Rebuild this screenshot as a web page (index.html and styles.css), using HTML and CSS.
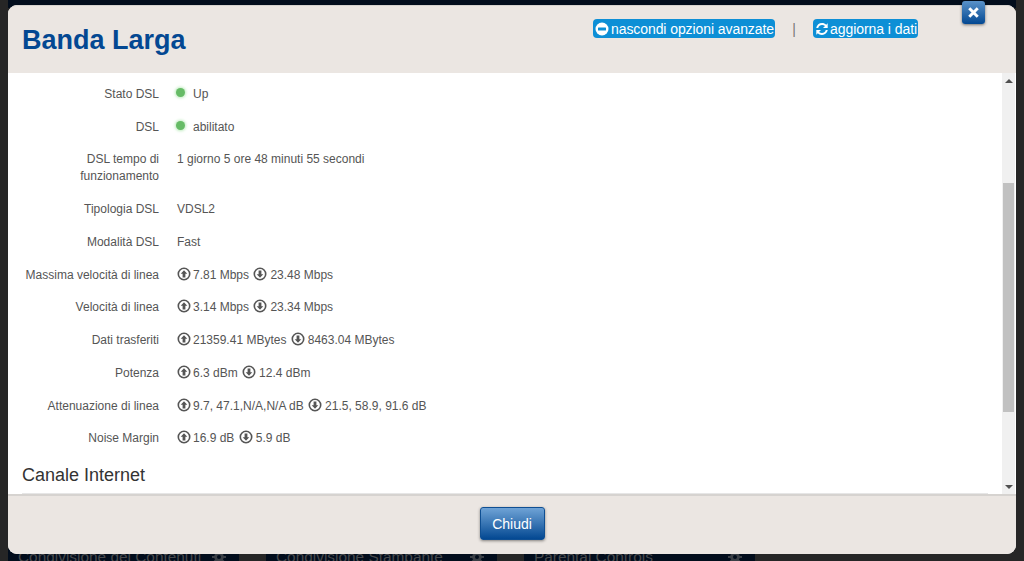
FILE: index.html
```html
<!DOCTYPE html>
<html lang="it">
<head>
<meta charset="utf-8">
<title>Banda Larga</title>
<link rel="stylesheet" href="styles.css">
</head>
<body>
<svg class="defs" width="0" height="0" aria-hidden="true">
  <symbol id="up" viewBox="0 0 14 14"><circle cx="7" cy="7" r="5.7" fill="none" stroke="currentColor" stroke-width="1.6"/><path d="M7 3.200 10.300 6.800H8.400V10.400H5.600V6.800H3.700Z" fill="currentColor"/></symbol>
  <symbol id="down" viewBox="0 0 14 14"><circle cx="7" cy="7" r="5.7" fill="none" stroke="currentColor" stroke-width="1.6"/><path d="M7 10.800 3.700 7.200H5.600V3.600H8.400V7.200H10.300Z" fill="currentColor"/></symbol>
  <symbol id="gear" viewBox="0 0 16 16"><circle cx="8" cy="8" r="3.600" fill="none" stroke="currentColor" stroke-width="2.400"/><path d="M8 1V15M1 8H15M3 3 13 13M13 3 3 13" stroke="currentColor" stroke-width="2"/><circle cx="8" cy="8" r="2" fill="#020d1c"/></symbol>
</svg>
<div class="backdrop-top"></div>
<div class="backdrop">
  <div class="tile"><span class="peek">Condivisione dei Contenuti</span><svg class="gear"><use href="#gear"/></svg></div>
  <div class="tile"><span class="peek">Condivisione Stampante</span><svg class="gear"><use href="#gear"/></svg></div>
  <div class="tile"><span class="peek">Parental Controls</span><svg class="gear"><use href="#gear"/></svg></div>
</div>
<div class="modal">
  <header class="modal-head">
    <h1 class="title">Banda Larga</h1>
    <div class="actions">
      <a class="pill pill-hide"><svg class="pill-ico" viewBox="0 0 14 14"><circle cx="7" cy="7" r="6.500" fill="#fff"/><rect x="3" y="5.600" width="8" height="2.800" rx=".5" fill="#0d8fd6"/></svg>nascondi opzioni avanzate</a>
      <span class="sep">|</span>
      <a class="pill pill-refresh"><svg class="pill-ico" viewBox="0 0 14 14"><path d="M1.200 5.900C1.800 3 4.100 1 7 1c1.700 0 3.100.7 4.200 1.700L12.700 1.300V6H8L10 4C9.200 3.300 8.200 2.900 7 2.900 5.200 2.900 3.700 4 3.200 5.900Z" fill="#fff"/><path d="M12.800 8.100C12.200 11 9.900 13 7 13c-1.700 0-3.100-.7-4.200-1.700L1.300 12.700V8H6L4 10C4.800 10.700 5.800 11.100 7 11.100 8.800 11.100 10.300 10 10.800 8.100Z" fill="#fff"/></svg>aggiorna i dati</a>
    </div>
  </header>
  <button class="close" aria-label="Chiudi"><svg viewBox="0 0 12 12" width="11" height="11"><path d="M2.500 2.500 9.500 9.500M9.500 2.500 2.500 9.500" stroke="#fff" stroke-width="3.200" stroke-linecap="square" fill="none"/></svg></button>
  <div class="modal-body">
    <div class="content">
      <div class="row led-row"><div class="lab">Stato DSL</div><div class="val"><i class="led"></i>Up</div></div>
      <div class="row led-row"><div class="lab">DSL</div><div class="val"><i class="led"></i>abilitato</div></div>
      <div class="row tall"><div class="lab">DSL tempo di funzionamento</div><div class="val">1 giorno 5 ore 48 minuti 55 secondi</div></div>
      <div class="row"><div class="lab">Tipologia DSL</div><div class="val">VDSL2</div></div>
      <div class="row"><div class="lab">Modalità DSL</div><div class="val">Fast</div></div>
      <div class="row"><div class="lab">Massima velocità di linea</div><div class="val"><svg class="arrow"><use href="#up"/></svg>7.81 Mbps <svg class="arrow arrow-down"><use href="#down"/></svg>23.48 Mbps</div></div>
      <div class="row"><div class="lab">Velocità di linea</div><div class="val"><svg class="arrow"><use href="#up"/></svg>3.14 Mbps <svg class="arrow arrow-down"><use href="#down"/></svg>23.34 Mbps</div></div>
      <div class="row"><div class="lab">Dati trasferiti</div><div class="val"><svg class="arrow"><use href="#up"/></svg>21359.41 MBytes <svg class="arrow arrow-down"><use href="#down"/></svg>8463.04 MBytes</div></div>
      <div class="row"><div class="lab">Potenza</div><div class="val"><svg class="arrow"><use href="#up"/></svg>6.3 dBm <svg class="arrow arrow-down"><use href="#down"/></svg>12.4 dBm</div></div>
      <div class="row"><div class="lab">Attenuazione di linea</div><div class="val"><svg class="arrow"><use href="#up"/></svg>9.7, 47.1,N/A,N/A dB <svg class="arrow arrow-down"><use href="#down"/></svg>21.5, 58.9, 91.6 dB</div></div>
      <div class="row"><div class="lab">Noise Margin</div><div class="val"><svg class="arrow"><use href="#up"/></svg>16.9 dB <svg class="arrow arrow-down"><use href="#down"/></svg>5.9 dB</div></div>
      <h2 class="section">Canale Internet</h2>
    </div>
    <div class="scrollbar">
      <span class="tri tri-up"></span>
      <div class="track"><div class="thumb"></div></div>
      <span class="tri tri-down"></span>
    </div>
  </div>
  <footer class="modal-foot"><button class="btn">Chiudi</button></footer>
</div>
</body>
</html>
```
FILE: styles.css
```css
* { box-sizing: border-box; }
html, body { margin: 0; height: 561px; overflow: hidden; }
body {
  position: relative;
  padding: 5px 8px 7px;
  background: #262626;
  font-family: "Liberation Sans", Arial, sans-serif;
  font-size: 12px;
  color: #555;
}
.defs { position: absolute; }
.backdrop-top {
  position: absolute;
  left: 8px;
  right: 8px;
  top: 0;
  height: 8px;
  background: #020d1c;
}
.backdrop {
  position: absolute;
  left: 8px;
  bottom: 0;
  height: 12px;
  display: flex;
  gap: 27px;
}
.tile {
  position: relative;
  width: 231px;
  height: 12px;
  background: #020d1c;
  overflow: hidden;
  color: #47494c;
}
.peek {
  position: absolute;
  left: 10px;
  top: -1px;
  font-size: 15.4px;
  line-height: 18px;
  white-space: nowrap;
}
.gear {
  position: absolute;
  right: 12px;
  top: 0;
  width: 16px;
  height: 16px;
  color: #3a3f46;
}
.modal {
  position: relative;
  height: 549px;
  display: flex;
  flex-direction: column;
  background: #fff;
  border-radius: 9px;
}
.modal-head {
  height: 68px;
  flex: none;
  position: relative;
  display: flex;
  background: #ebe6e2;
  border-top: 1px solid #d6d2ce;
  border-radius: 9px 9px 0 0;
}
.title {
  margin: 0;
  padding: 19px 0 0 14px;
  font-size: 27px;
  line-height: 30px;
  font-weight: 700;
  color: #034892;
}
.actions {
  position: absolute;
  left: 585px;
  top: 13px;
  display: flex;
  align-items: center;
}
.pill {
  display: flex;
  align-items: center;
  height: 19px;
  background: #0d8fd6;
  border-radius: 4px;
  color: #fff;
  font-size: 14px;
  white-space: nowrap;
}
.pill-hide { gap: 2px; padding: 0 1px 0 2px; letter-spacing: -0.08px; }
.pill-refresh { gap: 1px; padding: 0 1px 0 2px; letter-spacing: -0.06px; }
.pill-ico { width: 14px; height: 14px; flex: none; }
.sep { width: 38px; text-align: center; color: #777; font-size: 14px; }
.close {
  position: absolute;
  right: 31px;
  top: -4px;
  width: 23px;
  height: 23px;
  padding: 0;
  border: 0;
  border-radius: 3px;
  background: linear-gradient(#5a92c9, #034892);
  box-shadow: 0 1px 3px rgba(0,0,0,.5);
  display: flex;
  align-items: center;
  justify-content: center;
}
.modal-body {
  flex: 1;
  min-height: 0;
  display: flex;
  padding-right: 1px;
  background: #fff;
}
.content {
  flex: 1;
  min-width: 0;
  padding: 12px 14px 0;
  overflow: hidden;
}
.row {
  display: flex;
  min-height: 32.75px;
  line-height: 17px;
}
.led-row { padding-top: 1px; }
.tall { min-height: 50.5px; line-height: 17.5px; }
.lab {
  width: 137px;
  flex: none;
  text-align: right;
}
.val {
  padding-left: 18px;
  white-space: nowrap;
}
.led {
  display: inline-block;
  width: 9px;
  height: 9px;
  margin: 0 8px 0 -1px;
  border-radius: 50%;
  background: #66bb66;
  box-shadow: 0 0 3px 1px #bdebbd;
  vertical-align: 1px;
}
.arrow {
  width: 14px;
  height: 14px;
  margin-right: 2px;
  color: #555;
  vertical-align: -2px;
}
.arrow-down { margin-left: 1px; margin-right: 3px; }
.section {
  margin: 2px 0 0;
  padding-bottom: 8px;
  border-bottom: 1px solid #e6e6e6;
  font-size: 18px;
  line-height: 20px;
  font-weight: 400;
  color: #333;
}
.scrollbar {
  width: 13px;
  flex: none;
  display: flex;
  flex-direction: column;
  align-items: center;
  background: #f0f0f0;
}
.tri { width: 0; height: 0; flex: none; border-left: 4px solid transparent; border-right: 4px solid transparent; }
.tri-up { margin: 6px 0 5px; border-bottom: 4px solid #505050; }
.tri-down { margin: 6px 0 5px; border-top: 4px solid #505050; }
.track { flex: 1; width: 100%; padding-top: 95px; }
.thumb { height: 229px; margin: 0 1px; background: #c1c1c1; }
.modal-foot {
  height: 60px;
  flex: none;
  display: flex;
  justify-content: center;
  align-items: flex-start;
  padding-top: 11px;
  background: #ebe6e2;
  border-top: 2px solid #d6d3d0;
  border-radius: 0 0 9px 9px;
}
.btn {
  width: 65px;
  height: 33px;
  border: 1px solid #0f4f93;
  border-radius: 3px;
  background: linear-gradient(#6fa3d6, #034892);
  box-shadow: 0 1px 3px rgba(0,0,0,.45);
  color: #fff;
  font: 14px "Liberation Sans", Arial, sans-serif;
}
```
